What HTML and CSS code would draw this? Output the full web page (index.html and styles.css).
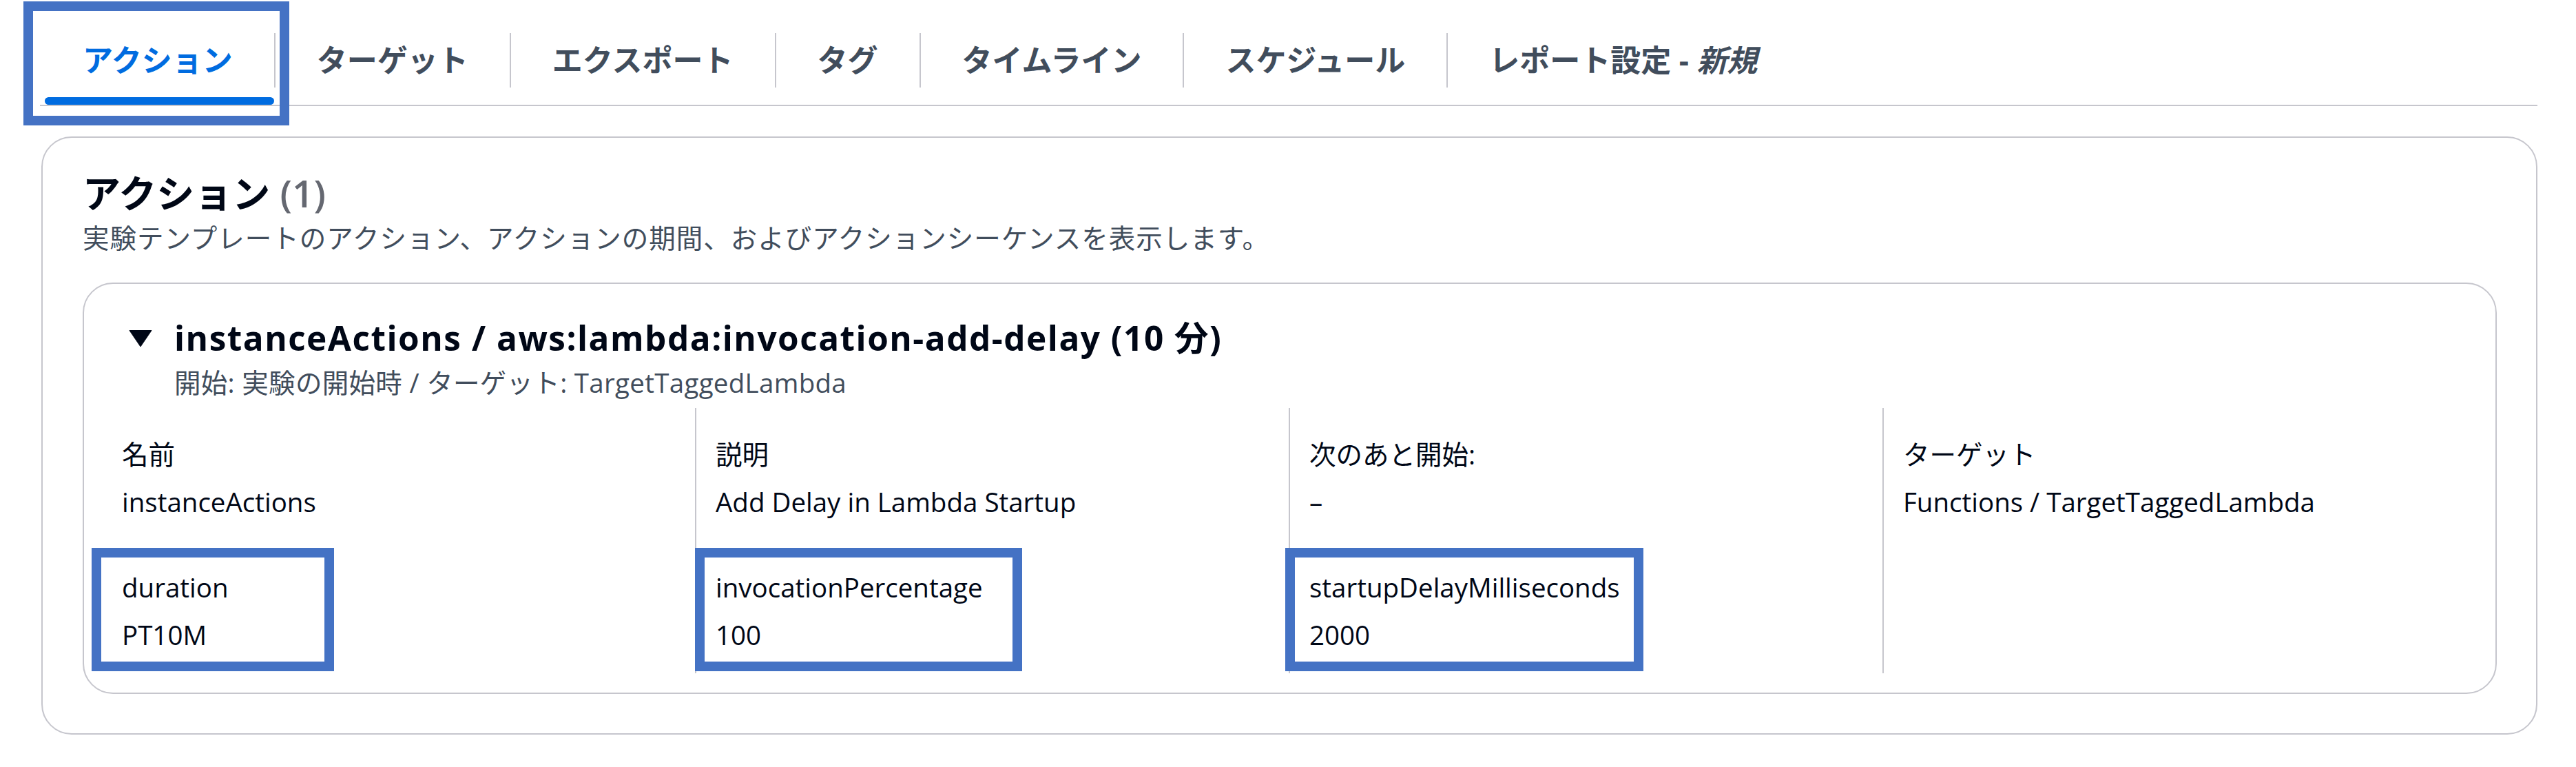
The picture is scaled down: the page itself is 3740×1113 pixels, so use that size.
FILE: index.html
```html
<!DOCTYPE html>
<html lang="ja">
<head>
<meta charset="utf-8">
<title>アクション</title>
<link rel="stylesheet" href="styles.css">
</head>
<body>
<div class="page">
  <nav class="tabs">
    <div class="tab tab-active">
      <span class="tab-label">アクション</span>
      <span class="underline"></span>
      <span class="mark mark-tab"></span>
    </div>
    <div class="tab"><span class="tab-label">ターゲット</span></div>
    <div class="tab"><span class="tab-label">エクスポート</span></div>
    <div class="tab"><span class="tab-label">タグ</span></div>
    <div class="tab"><span class="tab-label">タイムライン</span></div>
    <div class="tab"><span class="tab-label">スケジュール</span></div>
    <div class="tab"><span class="tab-label">レポート設定 - <em class="new">新規</em></span></div>
  </nav>

  <section class="container">
    <h2 class="heading">アクション <span class="counter">(1)</span></h2>
    <p class="desc">実験テンプレートのアクション、アクションの期間、およびアクションシーケンスを表示します。</p>

    <div class="card">
      <div class="card-header">
        <svg class="caret" viewBox="0 0 44 44" width="44" height="44" aria-hidden="true">
          <path d="M6 10.5h32L22 34z" fill="#000716" stroke="#000716" stroke-width="1" stroke-linejoin="round"/>
        </svg>
        <div class="card-titles">
          <h3 class="card-title">instanceActions / aws:lambda:invocation-add-delay (10 分)</h3>
          <div class="card-sub">開始: 実験の開始時 / ターゲット: TargetTaggedLambda</div>
        </div>
      </div>

      <div class="columns">
        <div class="col">
          <div class="kv"><div class="k">名前</div><div class="v">instanceActions</div></div>
          <div class="kv marked"><div class="k">duration</div><div class="v">PT10M</div><span class="mark mark-a"></span></div>
        </div>
        <div class="col">
          <div class="kv"><div class="k">説明</div><div class="v">Add Delay in Lambda Startup</div></div>
          <div class="kv marked"><div class="k">invocationPercentage</div><div class="v">100</div><span class="mark mark-b"></span></div>
        </div>
        <div class="col">
          <div class="kv"><div class="k">次のあと開始:</div><div class="v">–</div></div>
          <div class="kv marked"><div class="k">startupDelayMilliseconds</div><div class="v">2000</div><span class="mark mark-c"></span></div>
        </div>
        <div class="col">
          <div class="kv"><div class="k">ターゲット</div><div class="v">Functions / TargetTaggedLambda</div></div>
        </div>
      </div>
    </div>
  </section>
</div>
</body>
</html>
```

FILE: styles.css
```css
* { box-sizing: border-box; }

html, body {
  margin: 0;
  background: #ffffff;
}

body {
  font-family: "Open Sans", "Noto Sans CJK JP", sans-serif;
  color: #000716;
}

.page {
  padding: 0 56px 0 58px;
}

/* ---------- tabs ---------- */
.tabs {
  display: flex;
  height: 154px;
  border-bottom: 2px solid #c6c6cd;
}

.tab {
  position: relative;
  height: 152px;
  padding-top: 48px;
}

.tab-label {
  display: block;
  padding: 0 60px;
  border-left: 2px solid #c6c6cd;
  font-size: 44px;
  line-height: 79px;
  font-weight: 700;
  color: #414d5c;
  white-space: nowrap;
}

.tab-active .tab-label {
  border-left-color: transparent;
  color: #006ce0;
}

.new {
  font-style: italic;
}

.underline {
  position: absolute;
  left: 7px;
  right: 0;
  bottom: 0;
  height: 11px;
  border-radius: 6px;
  background: #006ce0;
}

/* ---------- annotation marks ---------- */
.mark {
  position: absolute;
  border: 14px solid #4472c4;
  pointer-events: none;
}

.mark-tab {
  top: 2px;
  left: -24px;
  width: 386px;
  height: 180px;
}

.marked {
  position: relative;
}

.marked .mark {
  top: -30px;
  height: 179px;
}

.mark-a { left: -44px; width: 352px; }
.mark-b { left: -30px; width: 475px; }
.mark-c { left: -35px; width: 520px; }

/* ---------- outer container ---------- */
.container {
  margin: 44px 0 0 2px;
  border: 2px solid #c6c6cd;
  border-radius: 44px;
  padding: 46.7px 57px 57px 58px;
}

.heading {
  margin: 0;
  font-size: 55px;
  line-height: 66px;
  font-weight: 700;
  color: #000716;
}

.counter {
  font-weight: 600;
  color: #656871;
}

.desc {
  margin: 5.8px 0 0;
  font-size: 38.5px;
  line-height: 55px;
  letter-spacing: 1px;
  color: #414d5c;
}

/* ---------- inner card ---------- */
.card {
  margin-top: 36.5px;
  border: 2px solid #c6c6cd;
  border-radius: 44px;
  padding-bottom: 28px;
}

.card-header {
  display: flex;
  align-items: flex-start;
  padding: 48.5px 28px 8.5px 59.5px;
}

.caret {
  flex: none;
  margin-top: 8.25px;
  margin-right: 27.5px;
}

.card-title {
  margin: 0;
  font-size: 49.5px;
  line-height: 60.5px;
  font-weight: 700;
  letter-spacing: 1.5px;
  color: #000716;
}

.card-sub {
  margin-top: 7.5px;
  font-size: 38.5px;
  line-height: 55px;
  letter-spacing: 0.3px;
  color: #414d5c;
}

.columns {
  display: grid;
  grid-template-columns: repeat(4, 1fr);
  padding: 0 28px 0 25px;
}

.col {
  border-left: 2px solid #c6c6cd;
  padding: 40px 28px 28.5px;
}

.col:first-child {
  border-left-color: transparent;
}

.kv + .kv {
  margin-top: 69px;
}

.k,
.v {
  font-size: 38.5px;
  line-height: 55px;
  color: #000716;
  white-space: nowrap;
}

.v {
  margin-top: 14px;
}
```
